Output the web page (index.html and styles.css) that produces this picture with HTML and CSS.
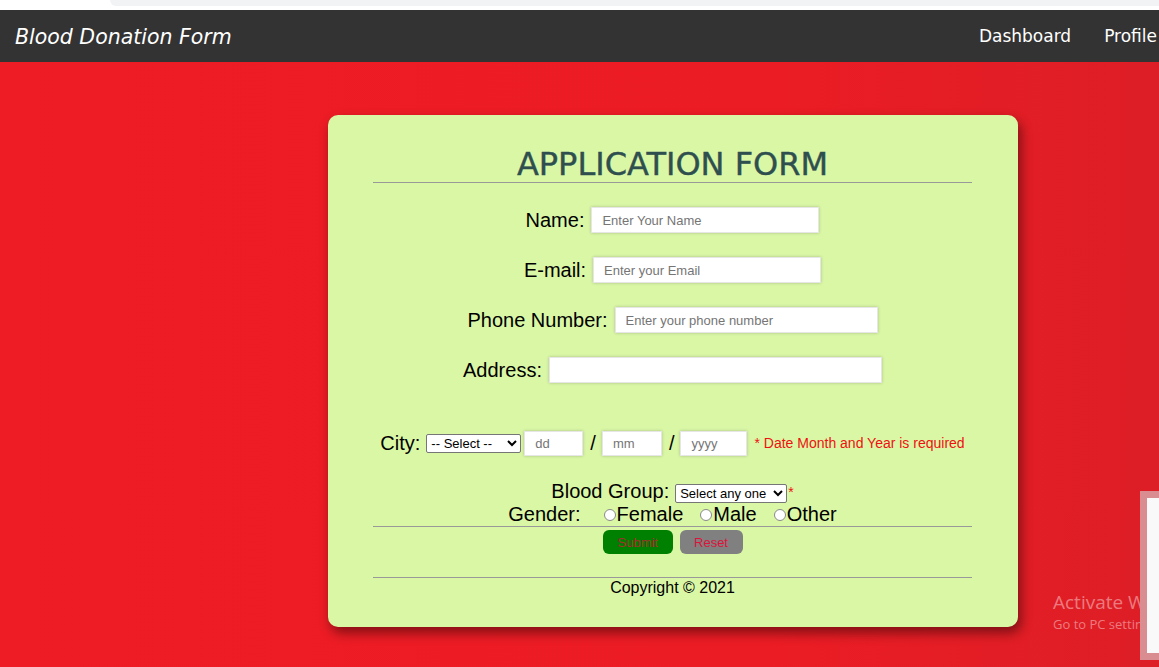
FILE: index.html
```html
<!DOCTYPE html>
<html lang="en">
<head>
<meta charset="utf-8">
<title>Blood Donation Form</title>
<link rel="stylesheet" href="styles.css">
</head>
<body>
<div class="chrome"><div class="omnibox"></div></div>
<header class="nav">
  <span class="brand">Blood Donation Form</span>
  <nav class="links">
    <a href="#">Dashboard</a>
    <a href="#">Profile</a>
  </nav>
</header>
<main class="page">
  <section class="card">
    <h1 class="title">APPLICATION FORM</h1>
    <hr class="rule">
    <div class="row row-first">
      <label class="lbl">Name:</label>
      <input class="field w-name" type="text" placeholder="Enter Your Name">
    </div>
    <div class="row">
      <label class="lbl">E-mail:</label>
      <input class="field w-name" type="text" placeholder="Enter your Email">
    </div>
    <div class="row">
      <label class="lbl">Phone Number:</label>
      <input class="field w-phone" type="text" placeholder="Enter your phone number">
    </div>
    <div class="row">
      <label class="lbl">Address:</label>
      <input class="field w-addr" type="text">
    </div>
    <div class="row-city">
      <label class="lbl">City:</label>
      <select class="sel sel-city"><option>-- Select --</option></select>
      <input class="field date dd" type="text" placeholder="dd">
      <span class="slash">/</span>
      <input class="field date mm" type="text" placeholder="mm">
      <span class="slash">/</span>
      <input class="field date yyyy" type="text" placeholder="yyyy">
      <span class="req">* Date Month and Year is required</span>
    </div>
    <div class="row-blood">
      <label class="lbl">Blood Group:</label>
      <select class="sel sel-blood"><option>Select any one</option></select>
      <span class="star">*</span>
    </div>
    <div class="row-gender">
      <span class="lbl">Gender:</span>
      <label class="opt opt-first"><input type="radio" name="g" class="radio">Female</label>
      <label class="opt"><input type="radio" name="g" class="radio">Male</label>
      <label class="opt"><input type="radio" name="g" class="radio">Other</label>
    </div>
    <hr class="rule">
    <div class="buttons">
      <button class="btn btn-submit" type="button">Submit</button>
      <button class="btn btn-reset" type="button">Reset</button>
    </div>
    <hr class="rule rule-foot">
    <p class="copy">Copyright © 2021</p>
  </section>
</main>
<div class="watermark">
  <div class="wm-big">Activate Windows</div>
  <div class="wm-small">Go to PC settings to activate Windows.</div>
</div>
<div class="side-panel"></div>
</body>
</html>
```
FILE: styles.css
```css
html, body {
  margin: 0;
  padding: 0;
}
body {
  width: 1159px;
  height: 667px;
  overflow: hidden;
  position: relative;
  font-family: "Liberation Sans", Arial, sans-serif;
  background: linear-gradient(90deg, #ee1c25 0%, #ec1c24 65%, #dd1e26 100%);
}
.chrome {
  height: 10px;
  background: #ffffff;
  display: flex;
}
.omnibox {
  margin-left: 110px;
  flex: 1;
  height: 6px;
  background: #f1f3f4;
  border-bottom-left-radius: 8px;
}
.nav {
  height: 52px;
  background: #333333;
  display: flex;
  align-items: center;
  justify-content: space-between;
  padding-left: 15px;
}
.brand {
  font-family: "DejaVu Sans", sans-serif;
  font-style: italic;
  font-size: 20.5px;
  color: #ffffff;
  padding-top: 2px;
}
.links {
  display: flex;
  gap: 33px;
  margin-right: 2px;
}
.links a {
  font-family: "DejaVu Sans", sans-serif;
  font-size: 17px;
  color: #ffffff;
  text-decoration: none;
}
.page {
  padding: 53px 0 0 328px;
}
.card {
  width: 690px;
  height: 512px;
  box-sizing: border-box;
  padding: 27px 46px 0 45px;
  background: #daf7a6;
  border-radius: 10px;
  box-shadow: 3px 6px 12px rgba(0, 0, 0, 0.45);
}
.title {
  margin: 0;
  font-family: "DejaVu Sans", sans-serif;
  font-weight: normal;
  font-size: 32px;
  line-height: 40px;
  padding-top: 2px;
  height: 38px;
  color: #2f4f4f;
  text-align: center;
  -webkit-text-stroke: 0.4px #2f4f4f;
}
.rule {
  border: 0;
  border-top: 1px solid #999999;
  margin: 0;
}
.row {
  height: 50px;
  display: flex;
  justify-content: center;
  align-items: center;
  gap: 7px;
}
.row-first {
  margin-top: 12px;
}
.lbl {
  font-size: 20px;
  color: #000000;
}
.field {
  height: 26px;
  box-sizing: border-box;
  border: 1px solid #e6e6e6;
  box-shadow: 0 0 3px rgba(0, 0, 0, 0.22);
  background: #ffffff;
  padding: 0 10px;
  font-family: "Liberation Sans", Arial, sans-serif;
  font-size: 13px;
  outline: none;
}
.field::placeholder {
  color: #757575;
}
.w-name { width: 228px; }
.w-phone { width: 263px; }
.w-addr { width: 333px; }
.row-city {
  margin-top: 24px;
  height: 48px;
  display: flex;
  justify-content: center;
  align-items: center;
}
.sel {
  height: 19px;
  box-sizing: border-box;
  font-family: "Liberation Sans", Arial, sans-serif;
  font-size: 13px;
  border: 1px solid #767676;
  border-radius: 2px;
  background: #ffffff;
  color: #000000;
  padding: 0;
}
.sel-city {
  width: 95px;
  margin-left: 6px;
}
.date {
  height: 25px;
  margin-top: 1px;
}
.dd { width: 59px; margin-left: 3px; }
.mm { width: 60px; }
.yyyy { width: 67px; }
.slash {
  font-size: 20px;
  margin: 0 6px 0 7px;
}
.req {
  color: #ee1111;
  font-size: 14px;
  margin-left: 7px;
}
.row-blood {
  margin-top: 13px;
  height: 23px;
  display: flex;
  justify-content: center;
  align-items: center;
}
.sel-blood {
  width: 112px;
  margin-left: 6px;
  margin-top: 3px;
}
.star {
  color: #ee1111;
  font-size: 14px;
  align-self: flex-start;
  margin-top: 4px;
  margin-left: 1px;
}
.row-gender {
  height: 23px;
  display: flex;
  justify-content: center;
  align-items: center;
  font-size: 20px;
}
.opt {
  display: flex;
  align-items: center;
  margin-left: 17px;
  font-size: 20px;
}
.opt-first {
  margin-left: 23px;
}
.radio {
  appearance: none;
  -webkit-appearance: none;
  width: 12px;
  height: 12px;
  margin: 1px 1px 0 0;
  border: 1px solid #8a8a8a;
  border-radius: 50%;
  background: #ffffff;
  box-sizing: border-box;
}
.buttons {
  display: flex;
  justify-content: center;
  gap: 7px;
  margin-top: 3px;
}
.btn {
  height: 24px;
  border: 0;
  border-radius: 6px;
  font-family: "Liberation Sans", Arial, sans-serif;
  font-size: 13px;
  padding: 0;
}
.btn-submit {
  width: 70px;
  background: #008000;
  color: #a52a2a;
}
.btn-reset {
  width: 63px;
  background: #808080;
  color: #dc143c;
}
.rule-foot {
  margin-top: 23px;
}
.copy {
  margin: 1px 0 0;
  text-align: center;
  font-size: 16px;
  line-height: 18px;
  color: #000000;
}
.watermark {
  position: absolute;
  left: 1053px;
  top: 589px;
  color: rgba(255, 255, 255, 0.42);
  font-family: "Open Sans", sans-serif;
  white-space: nowrap;
}
.wm-big {
  font-size: 19px;
  line-height: 26px;
}
.wm-small {
  font-size: 13px;
  line-height: 18px;
}
.side-panel {
  position: absolute;
  left: 1140px;
  top: 491px;
  width: 40px;
  height: 169px;
  box-sizing: border-box;
  border: 7px solid rgba(215, 135, 138, 0.95);
  background: #f9f9f9;
}
```
